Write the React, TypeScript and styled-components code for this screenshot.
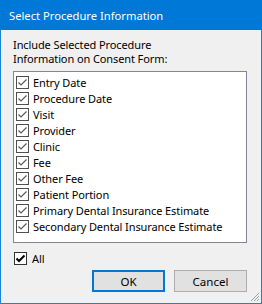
import React from 'react';
import styled, { createGlobalStyle } from 'styled-components';

const GlobalStyle = createGlobalStyle`
  html, body {
    margin: 0;
    padding: 0;
    background: #f0f0f0;
  }
  * {
    box-sizing: border-box;
  }
`;

const Window = styled.div`
  width: 262px;
  height: 304px;
  border: 1px solid #1883d7;
  border-top: none;
  background: #f0f0f0;
  display: flex;
  flex-direction: column;
  font-family: 'Noto Sans', 'Liberation Sans', sans-serif;
  font-size: 11px;
  letter-spacing: -0.1px;
  color: #000;
  position: relative;
`;

const TitleBar = styled.div`
  height: 30px;
  margin: 0 -1px;
  background: #0078d7;
  color: #fff;
  display: flex;
  align-items: center;
  padding-left: 9px;
  font-size: 11.2px;
  letter-spacing: 0;
`;

const Body = styled.div`
  flex: 1;
  display: flex;
  flex-direction: column;
  padding: 8px 14px 0 12px;
`;

const Prompt = styled.div`
  line-height: 14px;
`;

const ListBox = styled.div`
  margin-top: 5px;
  height: 172px;
  border: 1px solid #828790;
  background: #fff;
  padding-top: 2px;
`;

const Row = styled.label`
  display: flex;
  align-items: center;
  height: 16px;
  padding-left: 2px;
  gap: 4px;
  white-space: nowrap;
`;

const Box = styled.span<{ $strong?: boolean }>`
  width: 13px;
  height: 13px;
  flex: none;
  border: 1px solid ${p => (p.$strong ? '#333333' : '#505050')};
  background: #fff;
  display: flex;
  align-items: center;
  justify-content: center;
`;

const AllRow = styled(Row)`
  margin-top: 7px;
  padding-left: 1px;
  gap: 5px;
`;

const Buttons = styled.div`
  display: flex;
  justify-content: flex-end;
  gap: 9px;
  margin-top: 4px;
`;

const Button = styled.button<{ $default?: boolean }>`
  width: 73px;
  height: 22px;
  font-family: inherit;
  font-size: 11.5px;
  color: #000;
  background: #e1e1e1;
  border: ${p => (p.$default ? '2px solid #0078d7' : '1px solid #adadad')};
  padding: 0;
  display: flex;
  align-items: center;
  justify-content: center;
`;

const Grip = styled.svg`
  position: absolute;
  right: 1px;
  bottom: 1px;
`;

const Check: React.FC<{ color: string; width: number }> = ({ color, width }) => (
  <svg width="11" height="11" viewBox="0 0 11 11">
    <path d="M1.5 5.5 L4 8 L9.5 2.5" fill="none" stroke={color} strokeWidth={width} />
  </svg>
);

const fields = [
  'Entry Date',
  'Procedure Date',
  'Visit',
  'Provider',
  'Clinic',
  'Fee',
  'Other Fee',
  'Patient Portion',
  'Primary Dental Insurance Estimate',
  'Secondary Dental Insurance Estimate',
];

export default function App() {
  return (
    <>
      <GlobalStyle />
      <Window>
        <TitleBar>Select Procedure Information</TitleBar>
        <Body>
          <Prompt>
            Include Selected Procedure
            <br />
            Information on Consent Form:
          </Prompt>
          <ListBox>
            {fields.map(f => (
              <Row key={f}>
                <Box>
                  <Check color="#5a5a5a" width={1.2} />
                </Box>
                {f}
              </Row>
            ))}
          </ListBox>
          <AllRow>
            <Box $strong>
              <Check color="#000" width={2} />
            </Box>
            All
          </AllRow>
          <Buttons>
            <Button $default>OK</Button>
            <Button>Cancel</Button>
          </Buttons>
        </Body>
        <Grip width="12" height="12" viewBox="0 0 12 12">
          <path d="M11 3 L3 11 M11 6 L6 11 M11 9 L9 11" stroke="#a0a0a0" strokeWidth="1" />
        </Grip>
      </Window>
    </>
  );
}
